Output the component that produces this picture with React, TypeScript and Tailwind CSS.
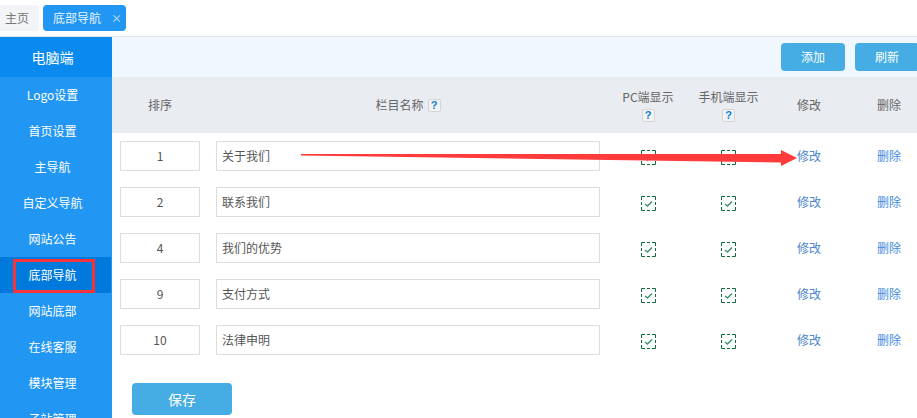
const menu = ["Logo设置", "首页设置", "主导航", "自定义导航", "网站公告", "底部导航", "网站底部", "在线客服", "模块管理", "子站管理"];

const rows = [
  { sort: "1", name: "关于我们" },
  { sort: "2", name: "联系我们" },
  { sort: "4", name: "我们的优势" },
  { sort: "9", name: "支付方式" },
  { sort: "10", name: "法律申明" },
];

function Help() {
  return (
    <span className="inline-flex h-[13px] w-[13px] items-center justify-center rounded-[2px] border border-[#d5d5d5] bg-[#f3f3f3] font-['Liberation_Sans',sans-serif] text-[11px] leading-none font-bold text-[#0a7fd6]">
      ?
    </span>
  );
}

function Check() {
  return (
    <svg width="15" height="15" viewBox="0 0 15 15" fill="none">
      <path
        d="M0.5 4V0.5H4M6 0.5H9M11 0.5H14.5V4M14.5 6V9M14.5 11V14.5H11M9 14.5H6M4 14.5H0.5V11M0.5 9V6"
        stroke="#0f6b3c"
      />
      <path d="M4 8 L6.5 10 L11 5.5" stroke="#3f9468" strokeWidth="1.5" />
    </svg>
  );
}

export default function App() {
  return (
    <div className="relative h-[418px] w-[917px] overflow-hidden bg-white font-['Noto_Sans_CJK_SC','Liberation_Sans',sans-serif] text-[12px] text-[#666]">
      <div className="flex h-[37px] items-start gap-[4px] border-b border-[#e1e6f0] pt-[5px]">
        <div className="flex h-[26px] w-[39px] items-center justify-end rounded-r-[4px] bg-[#f2f4f8] pr-[10px] text-[#777]">主页</div>
        <div className="flex h-[26px] w-[83px] items-center rounded-[4px] bg-[#2196f3] pl-[10px] text-[#e8f4ff]">
          底部导航
          <span className="ml-[10px] text-[11px] leading-none text-[#d5e9fb]">×</span>
        </div>
      </div>
      <div className="flex">
        <aside className="h-[381px] w-[112px] shrink-0 overflow-hidden bg-[#2196f3] text-center text-white">
          <div className="flex h-[40px] items-center justify-center bg-[#0a8aee] pr-[7px] text-[14px]">电脑端</div>
          {menu.map((item) => (
            <div key={item} className={"mr-[1px] flex h-[36px] items-center justify-center pr-[6px] " + (item === "底部导航" ? "bg-[#0079dc]" : "")}>
              {item}
            </div>
          ))}
        </aside>
        <main className="min-w-0 flex-1">
          <div className="flex h-[40px] items-start gap-[10px] bg-[#f0f7fe] pt-[6px] pl-[669px]">
            <button className="h-[28px] w-[64px] shrink-0 rounded-[4px] bg-[#45ade3] text-white">添加</button>
            <button className="h-[28px] w-[64px] shrink-0 rounded-[4px] bg-[#45ade3] text-white">刷新</button>
          </div>
          <div className="flex h-[56px] items-center bg-[#e9ecf1] text-center">
            <div className="w-[96px] shrink-0">排序</div>
            <div className="flex w-[400px] shrink-0 items-center justify-center gap-[4px]">栏目名称 <Help /></div>
            <div className="flex w-[80px] shrink-0 flex-col items-center gap-[3px]">PC端显示 <Help /></div>
            <div className="flex w-[81px] shrink-0 flex-col items-center gap-[3px]">手机端显示 <Help /></div>
            <div className="w-[80px] shrink-0">修改</div>
            <div className="w-[80px] shrink-0">删除</div>
          </div>
          <div className="flex flex-col gap-[16px] pt-[8px]">
            {rows.map((row) => (
              <div key={row.sort} className="flex h-[30px] items-center text-center">
                <div className="ml-[8px] flex h-[30px] w-[80px] shrink-0 items-center justify-center border border-[#ddd] text-[#555]">{row.sort}</div>
                <div className="ml-[16px] flex h-[30px] w-[384px] shrink-0 items-center border border-[#ddd] pl-[5px] text-[#555]">{row.name}</div>
                <div className="mt-[3px] ml-[8px] flex w-[80px] shrink-0 justify-center"><Check /></div>
                <div className="mt-[3px] flex w-[81px] shrink-0 justify-center"><Check /></div>
                <div className="w-[80px] shrink-0 text-[#4a84c9]">修改</div>
                <div className="w-[80px] shrink-0 text-[#3f8ae0]">删除</div>
              </div>
            ))}
          </div>
          <button className="mt-[28px] ml-[20px] h-[32px] w-[100px] rounded-[4px] bg-[#45ade3] text-[14px] text-white">保存</button>
        </main>
      </div>
      <div className="absolute top-[259px] left-[13px] h-[34px] w-[82px] border-[3px] border-[#f5333a]" />
      <svg className="absolute top-0 left-0" width="917" height="418" viewBox="0 0 917 418">
        <polygon points="301,154 781,154 781,150 797,158 781,166 781,162.5 301,155.5" fill="#ff3b3b" />
      </svg>
    </div>
  );
}
